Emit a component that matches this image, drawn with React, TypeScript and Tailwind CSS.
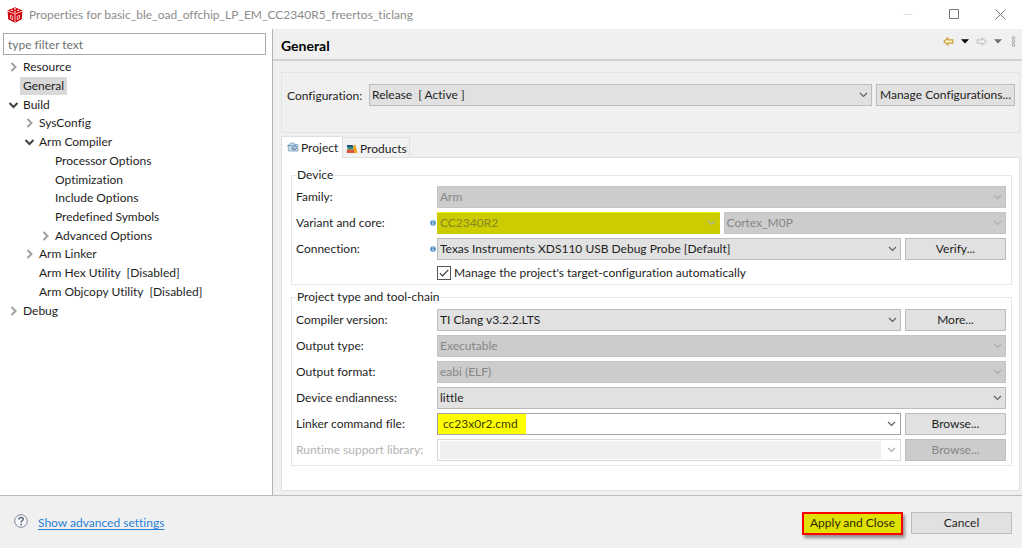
import type { ReactNode } from "react";

type TreeNode = { label: string; depth: number; state: "open" | "closed" | "leaf"; selected?: boolean };

const tree: TreeNode[] = [
  { label: "Resource", depth: 0, state: "closed" },
  { label: "General", depth: 0, state: "leaf", selected: true },
  { label: "Build", depth: 0, state: "open" },
  { label: "SysConfig", depth: 1, state: "closed" },
  { label: "Arm Compiler", depth: 1, state: "open" },
  { label: "Processor Options", depth: 2, state: "leaf" },
  { label: "Optimization", depth: 2, state: "leaf" },
  { label: "Include Options", depth: 2, state: "leaf" },
  { label: "Predefined Symbols", depth: 2, state: "leaf" },
  { label: "Advanced Options", depth: 2, state: "closed" },
  { label: "Arm Linker", depth: 1, state: "closed" },
  { label: "Arm Hex Utility\u00a0 [Disabled]", depth: 1, state: "leaf" },
  { label: "Arm Objcopy Utility\u00a0 [Disabled]", depth: 1, state: "leaf" },
  { label: "Debug", depth: 0, state: "closed" },
];

const indents = ["pl-2", "pl-6", "pl-10"];

function TreeArrow({ state }: { state: TreeNode["state"] }) {
  if (state === "leaf") return <span className="w-3" />;
  return (
    <svg viewBox="0 0 12 12" className="h-3 w-3" fill="none" strokeWidth="2">
      {state === "open" ? (
        <path d="M1.5 4 L5.5 8 L9.5 4" stroke="#404040" />
      ) : (
        <path d="M3.5 2 L7.5 6 L3.5 10" stroke="#a0a0a0" />
      )}
    </svg>
  );
}

function Chevron({ faded = false }: { faded?: boolean }) {
  return (
    <svg viewBox="0 0 9 6" className={`h-[6px] w-[9px] ${faded ? "text-[#adadad]" : "text-[#606060]"}`} fill="none">
      <path d="M1 1 L4.5 4.5 L8 1" stroke="currentColor" strokeWidth="1.2" />
    </svg>
  );
}

type ComboProps = { id: string; value: string; label?: string; disabled?: boolean; highlight?: boolean };

function Combo({ id, value, label, disabled = false, highlight = false }: ComboProps) {
  const look = highlight
    ? "border-[#cccc00] border-t-[#f4f400] bg-[#cccc00] text-[#87872a]"
    : disabled
      ? "border-[#c4c4c4] bg-[#cccccc] text-[#868686]"
      : "border-[#bcbcbc] bg-[#e1e1e1] text-[#1e1e1e]";
  return (
    <div className="relative min-w-0 flex-1">
      <select
        id={id}
        aria-label={label}
        disabled={disabled}
        className={`block h-[22px] w-full appearance-none border pl-0.5 pr-5 opacity-100 ${look}`}
      >
        <option>{value}</option>
      </select>
      <span className="pointer-events-none absolute inset-y-0 right-1 flex items-center">
        <Chevron faded={disabled} />
      </span>
    </div>
  );
}

function PushButton({ children, disabled = false }: { children: ReactNode; disabled?: boolean }) {
  return (
    <button
      type="button"
      disabled={disabled}
      className={`h-[22px] w-[101px] shrink-0 border ${
        disabled ? "border-[#bfbfbf] bg-[#cccccc] text-[#868686]" : "border-[#bcbcbc] bg-[#e1e1e1] text-[#1e1e1e]"
      }`}
    >
      {children}
    </button>
  );
}

function InfoDot() {
  return (
    <svg viewBox="0 0 6 6" className="h-[6px] w-[6px]">
      <circle cx="3" cy="3" r="2.8" fill="#4f8fc6" />
      <path d="M3 1.2v.8M3 2.6v2.2" stroke="#fff" strokeWidth="1" />
    </svg>
  );
}

function Row({ label, htmlFor, info = false, disabled = false, children }: {
  label: string;
  htmlFor: string;
  info?: boolean;
  disabled?: boolean;
  children: ReactNode;
}) {
  return (
    <div className="grid grid-cols-[141px_minmax(0,1fr)] items-center">
      <div className="flex items-center justify-between pr-px">
        <label htmlFor={htmlFor} className={disabled ? "text-[#b4b4b4]" : ""}>{label}</label>
        {info && <InfoDot />}
      </div>
      <div className="flex items-center gap-1">{children}</div>
    </div>
  );
}

function Group({ title, children }: { title: string; children: ReactNode }) {
  return (
    <fieldset className="min-w-0 border border-[#e6e6e6] pb-0.5 pl-1 pr-[5px]">
      <legend className="px-px leading-4">{title}</legend>
      {children}
    </fieldset>
  );
}

function CubeLogo() {
  return (
    <svg viewBox="0 0 16 16" className="h-4 w-4">
      <path d="M8 .3 15.4 3.4 14.8 12.2 8 15.8 1.2 12.2 .6 3.4Z" fill="#cf0008" />
      <path d="M.8 4.2 8 7 15.2 4.2M8 7V15.6" stroke="#fff" strokeWidth=".8" fill="none" />
      <ellipse cx="8" cy="1.9" rx="1.2" ry=".55" fill="#fff" />
      <ellipse cx="4.9" cy="3.3" rx="1.3" ry=".6" fill="#fff" />
      <ellipse cx="11.1" cy="3.3" rx="1.3" ry=".6" fill="#fff" />
      <ellipse cx="8" cy="4.8" rx="1.3" ry=".6" fill="#fff" />
      <path d="M3.4 11.4V8.3L5.7 9.2V12.6ZM12.6 11.4V8.3L10.3 9.2V12.6Z" fill="none" stroke="#fff" strokeWidth=".8" />
    </svg>
  );
}

function ProjectIcon() {
  return (
    <svg viewBox="0 0 12 11" className="h-[11px] w-3">
      <path d="M1 3.5 4 1h3l1 1.5h3V9H1.5Z" fill="#c5dbed" stroke="#7f9fbd" strokeWidth=".8" />
      <path d="M.5 3.5H4" stroke="#6f91b2" />
      <circle cx="7.2" cy="5.6" r="2.3" fill="#e8f1f8" stroke="#527da5" strokeWidth=".9" />
      <path d="M5.6 4 9 7.4M8.8 4 5.6 7.2" stroke="#527da5" strokeWidth=".9" />
    </svg>
  );
}

function ProductsIcon() {
  return (
    <svg viewBox="0 0 12 10" className="h-[10px] w-3">
      <path d="M1 1h5.5l1 2H1Z" fill="#234e7c" />
      <path d="M1.5 3h6v2.4H1.5Z" fill="#21906c" />
      <path d="M.8 5.4h8V9H.8Z" fill="#d45a3a" />
      <path d="M7.2 1.6 9.4.8 11.6 9H8.2Z" fill="#f0a41c" />
    </svg>
  );
}

function Triangle({ className }: { className: string }) {
  return (
    <svg viewBox="0 0 8 5" className={`h-[5px] w-2 ${className}`}>
      <path d="M0 .3h8L4 4.6Z" fill="currentColor" />
    </svg>
  );
}

function BlockArrow({ className, flip = false }: { className: string; flip?: boolean }) {
  return (
    <svg viewBox="0 0 11 9" className={`h-[9px] w-[11px] ${className} ${flip ? "-scale-x-100" : ""}`}>
      <path d="M.9 4.5 4.8.9v2h5v3.2h-5v2Z" fill={flip ? "#f7f7f7" : "#fff6cf"} stroke="currentColor" strokeWidth="1.1" />
    </svg>
  );
}

export default function App() {
  return (
    <div className="flex min-h-screen flex-col bg-white font-['Lato','Open_Sans',sans-serif] text-[12px] leading-4 text-[#1e1e1e] [font-variant-ligatures:none]">
      <header className="flex h-[29px] items-center justify-between pl-[7px] pr-4">
        <div className="flex items-center gap-1.5">
          <CubeLogo />
          <h1 className="text-[#8c8c8c]">Properties for basic_ble_oad_offchip_LP_EM_CC2340R5_freertos_ticlang</h1>
        </div>
        <div className="flex items-center gap-[35px] text-[#777777]">
          <button type="button" aria-label="Minimize" disabled className="text-[#e2e2e2]">
            <svg viewBox="0 0 11 11" className="h-[11px] w-[11px]"><path d="M0 5.5h10" stroke="currentColor" /></svg>
          </button>
          <button type="button" aria-label="Maximize">
            <svg viewBox="0 0 11 11" className="h-[11px] w-[11px]"><path d="M.5 .5h9v9h-9Z" fill="none" stroke="currentColor" /></svg>
          </button>
          <button type="button" aria-label="Close">
            <svg viewBox="0 0 11 11" className="h-[11px] w-[11px]"><path d="M.5 .5 10.5 10.5M10.5 .5 .5 10.5" stroke="currentColor" /></svg>
          </button>
        </div>
      </header>

      <div className="flex flex-1 border-b border-[#bdbdbd]">
        <aside className="w-[273px] shrink-0 border-r border-[#b4b4b4] pt-1">
          <div className="pl-[3px] pr-1.5">
            <input
              type="text"
              aria-label="Filter"
              placeholder="type filter text"
              className="block h-[22px] w-full border border-[#a9a9a9] px-1 placeholder:text-[#6f6f6f]"
            />
          </div>
          <ul className="mt-[3px] grid h-[262px] auto-rows-fr">
            {tree.map((node) => (
              <li key={node.label} className={`flex items-center ${indents[node.depth]}`}>
                <TreeArrow state={node.state} />
                <span className={`px-[3px] leading-[18px] ${node.selected ? "bg-[#d9d9d9]" : ""}`}>{node.label}</span>
              </li>
            ))}
          </ul>
        </aside>

        <main className="flex min-w-0 flex-1 flex-col bg-[#f0f0f0]">
          <div className="flex h-8 items-center justify-between border-b-2 border-[#d2d2d2] pl-2 pr-1.5">
            <h2 className="pt-1 text-[14px] font-bold text-black">General</h2>
            <div className="flex items-center gap-[7px] pb-1.5">
              <button type="button" aria-label="Back"><BlockArrow className="text-[#cf9a35]" /></button>
              <button type="button" aria-label="Back history"><Triangle className="text-black" /></button>
              <button type="button" aria-label="Forward"><BlockArrow flip className="text-[#c2c2c2]" /></button>
              <button type="button" aria-label="Forward history"><Triangle className="text-[#6e6e6e]" /></button>
              <button type="button" aria-label="View menu" className="pl-0.5">
                <svg viewBox="0 0 5 11" className="h-[11px] w-[5px]" fill="#fff" stroke="#8f8f8f" strokeWidth=".9">
                  <circle cx="2.5" cy="1.9" r="1.3" /><circle cx="2.5" cy="5.5" r="1.3" /><circle cx="2.5" cy="9.1" r="1.3" />
                </svg>
              </button>
            </div>
          </div>

          <div className="flex flex-1 flex-col pb-1 pl-2 pr-0.5 pt-[11px]">
            <section className="flex h-[61px] items-start gap-1 border border-[#e4e4e4] pl-[5px] pr-1 pt-[11px]">
              <label htmlFor="configuration" className="w-[78px] shrink-0 leading-[24px]">Configuration:</label>
              <Combo id="configuration" value={"Release\u00a0 [ Active ]"} />
              <button type="button" className="h-[22px] w-[139px] shrink-0 whitespace-nowrap border border-[#bcbcbc] bg-[#e1e1e1]">
                Manage Configurations...
              </button>
            </section>

            <div role="tablist" className="mt-[3px] flex items-end">
              <button type="button" role="tab" aria-selected="true" className="z-10 -mb-px flex h-[22px] w-[62px] items-center gap-0.5 border border-b-0 border-[#e0e0e0] bg-white pl-[5px]">
                <ProjectIcon />
                Project
              </button>
              <button type="button" role="tab" aria-selected="false" className="flex h-5 w-[67px] items-center gap-0.5 border border-b-0 border-l-0 border-[#e0e0e0] bg-[#f2f2f2] pl-[3px] pt-0.5">
                <ProductsIcon />
                Products
              </button>
            </div>

            <div role="tabpanel" className="flex flex-1 flex-col gap-1 border border-[#e0e0e0] bg-white pb-5 pl-[9px] pr-[7px] pt-[9px]">
              <Group title="Device">
                <div className="flex flex-col gap-1 pt-[3px]">
                  <Row label="Family:" htmlFor="family">
                    <Combo id="family" value="Arm" disabled />
                  </Row>
                  <Row label="Variant and core:" htmlFor="variant" info>
                    <Combo id="variant" value="CC2340R2" disabled highlight />
                    <Combo id="core" label="Core" value="Cortex_M0P" disabled />
                  </Row>
                  <Row label="Connection:" htmlFor="connection" info>
                    <Combo id="connection" value="Texas Instruments XDS110 USB Debug Probe [Default]" />
                    <PushButton>Verify...</PushButton>
                  </Row>
                  <div className="pl-[141px]">
                    <label className="flex h-[18px] items-center gap-[3px]">
                      <span className="relative flex">
                        <input type="checkbox" defaultChecked className="peer h-[14px] w-[14px] appearance-none border border-[#555555] bg-white" />
                        <svg viewBox="0 0 14 14" className="pointer-events-none invisible absolute inset-0 h-[14px] w-[14px] peer-checked:visible" fill="none">
                          <path d="M2.8 7.2 5.6 10 11.2 3.8" stroke="#333" strokeWidth="1.2" />
                        </svg>
                      </span>
                      Manage the project's target-configuration automatically
                    </label>
                  </div>
                </div>
              </Group>

              <Group title="Project type and tool-chain">
                <div className="flex flex-col gap-1 pb-0.5 pt-1">
                  <Row label="Compiler version:" htmlFor="compiler">
                    <Combo id="compiler" value="TI Clang v3.2.2.LTS" />
                    <PushButton>More...</PushButton>
                  </Row>
                  <Row label="Output type:" htmlFor="output-type">
                    <Combo id="output-type" value="Executable" disabled />
                  </Row>
                  <Row label="Output format:" htmlFor="output-format">
                    <Combo id="output-format" value="eabi (ELF)" disabled />
                  </Row>
                  <Row label="Device endianness:" htmlFor="endianness">
                    <Combo id="endianness" value="little" />
                  </Row>
                  <Row label="Linker command file:" htmlFor="linker-file">
                    <div className="flex h-[22px] min-w-0 flex-1 items-stretch justify-between border border-[#a3a3a3] bg-white pr-1">
                      <input id="linker-file" type="text" defaultValue="cc23x0r2.cmd" className="w-[88px] bg-[#ffff00] pl-[5px] text-[#3c3c00]" />
                      <button type="button" aria-label="Show linker command files"><Chevron /></button>
                    </div>
                    <PushButton>Browse...</PushButton>
                  </Row>
                  <Row label="Runtime support library:" htmlFor="runtime-library" disabled>
                    <div className="flex h-[22px] min-w-0 flex-1 items-stretch gap-1.5 border border-[#d9d9d9] bg-white py-px pl-0.5 pr-1">
                      <input id="runtime-library" type="text" disabled className="min-w-0 flex-1 bg-[#f0f0f0]" />
                      <button type="button" disabled aria-label="Show runtime libraries"><Chevron faded /></button>
                    </div>
                    <PushButton disabled>Browse...</PushButton>
                  </Row>
                </div>
              </Group>
            </div>
          </div>
        </main>
      </div>

      <footer className="flex h-[52px] items-center justify-between bg-[#f0f0f0] pl-[14px] pr-2.5 pt-0.5">
        <div className="flex items-center gap-2.5">
          <button type="button" aria-label="Help" className="pb-1">
            <svg viewBox="0 0 14 14" className="h-[14px] w-[14px]" fill="none">
              <circle cx="7" cy="7" r="6.3" fill="#f7f8fb" stroke="#7b8598" strokeWidth="1" />
              <path d="M4.9 5.4c0-2.7 4.3-2.6 4.3-.2 0 1.6-2.1 1.5-2.1 3.2" stroke="#59657c" strokeWidth="1.5" />
              <circle cx="7.1" cy="10.4" r=".9" fill="#59657c" />
            </svg>
          </button>
          <a href="#advanced" className="text-[#2a7fd6] underline underline-offset-2">Show advanced settings</a>
        </div>
        <div className="flex items-center gap-2">
          <button type="button" className="h-[23px] w-[101px] whitespace-nowrap border-2 border-[#ff0000] bg-[#e1e100] text-[#2b2b00] shadow-[2px_3px_3px_rgba(0,0,0,0.4)]">
            Apply and Close
          </button>
          <PushButton>Cancel</PushButton>
        </div>
      </footer>
    </div>
  );
}
